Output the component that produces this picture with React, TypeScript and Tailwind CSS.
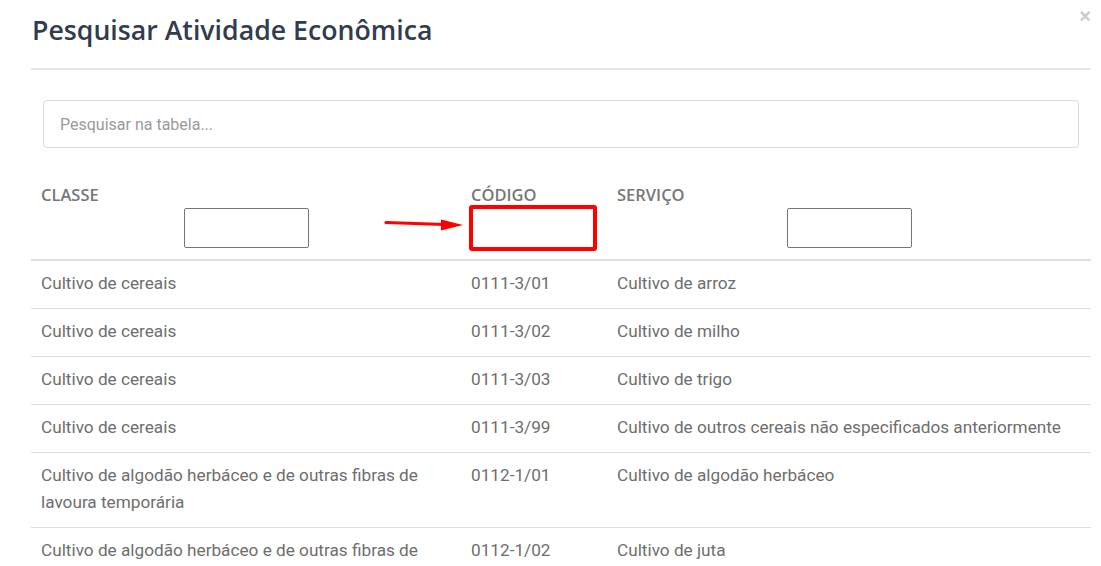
import React from "react";

const ROWS = [
  { classe: "Cultivo de cereais", codigo: "0111-3/01", servico: "Cultivo de arroz" },
  { classe: "Cultivo de cereais", codigo: "0111-3/02", servico: "Cultivo de milho" },
  { classe: "Cultivo de cereais", codigo: "0111-3/03", servico: "Cultivo de trigo" },
  {
    classe: "Cultivo de cereais",
    codigo: "0111-3/99",
    servico: "Cultivo de outros cereais não especificados anteriormente",
  },
  {
    classe: "Cultivo de algodão herbáceo e de outras fibras de lavoura temporária",
    codigo: "0112-1/01",
    servico: "Cultivo de algodão herbáceo",
  },
  {
    classe: "Cultivo de algodão herbáceo e de outras fibras de lavoura temporária",
    codigo: "0112-1/02",
    servico: "Cultivo de juta",
  },
];

function HeaderCell({
  label,
  highlight = false,
  width,
}: {
  label: string;
  highlight?: boolean;
  width: string;
}) {
  return (
    <th className={`${width} px-[10px] pt-[10px] pb-[11px] text-left align-top font-normal`}>
      <div className="h-[20px] text-[16.5px] leading-[20px] font-semibold text-[#777] font-['Open_Sans',sans-serif]">
        {label}
      </div>
      <div className="mt-[3px] h-[40px] flex items-center justify-center">
        {highlight ? (
          <input className="w-[128px] h-[46px] shrink-0 -ml-[2px] border-[4px] border-[#f00] rounded-[3px] bg-white outline-none" />
        ) : (
          <input className="w-[125px] h-[40px] shrink-0 border border-[#777] rounded-[2px] bg-white outline-none" />
        )}
      </div>
    </th>
  );
}

export default function App() {
  return (
    <div className="relative w-[1101px] h-[566px] overflow-hidden bg-white font-['Roboto',sans-serif]">
      <button className="absolute right-[10px] top-[6px] text-[20px] font-bold leading-none text-[#c9c9c9] font-['Liberation_Sans',sans-serif]">
        ×
      </button>

      <div className="pl-[31px] pr-[10px]">
        {/* Title */}
        <h4 className="pt-[12px] pb-[20px] pl-[1px] text-[26.7px] leading-[36px] font-semibold text-[#333c4e] font-['Open_Sans',sans-serif]">
          Pesquisar Atividade Econômica
        </h4>
        <div className="h-[2px] bg-[#e6e6e6]" />

        {/* Search */}
        <div className="px-[12px] pt-[30px] pb-[27px]">
          <input
            placeholder="Pesquisar na tabela..."
            className="w-full h-[48px] px-[16px] rounded-[4px] border border-[#dcdcdc] text-[16px] text-[#555] placeholder:text-[#9a9a9a] outline-none"
          />
        </div>

        {/* Table */}
        <div className="relative">
          {/* annotation arrow */}
          <svg
            className="absolute left-[353px] top-[42px]"
            width="82"
            height="16"
            viewBox="0 0 82 16"
          >
            <line x1="2" y1="5.5" x2="60" y2="7.5" stroke="#f00" strokeWidth="3.2" strokeLinecap="round" />
            <polygon points="57,2.5 79,8 57,13.5" fill="#f00" />
          </svg>
          <table className="w-full table-fixed border-collapse">
            <thead>
              <tr className="border-b-2 border-[#dedede]">
                <HeaderCell label="CLASSE" width="w-[430px]" />
                <HeaderCell label="CÓDIGO" width="w-[146px]" highlight />
                <HeaderCell label="SERVIÇO" width="w-[484px]" />
              </tr>
            </thead>
            <tbody>
              {ROWS.map((row, i) => (
                <tr key={i} className="border-b border-[#dedede]">
                  <td className="px-[10px] pt-[9px] pb-[11px] align-top text-[17.2px] leading-[27px] text-[#6e6e6e]">
                    {row.classe}
                  </td>
                  <td className="px-[10px] pt-[9px] pb-[11px] align-top text-[17.2px] leading-[27px] text-[#6e6e6e]">
                    {row.codigo}
                  </td>
                  <td className="px-[10px] pt-[9px] pb-[11px] align-top text-[17.2px] leading-[27px] text-[#6e6e6e]">
                    {row.servico}
                  </td>
                </tr>
              ))}
            </tbody>
          </table>
        </div>
      </div>
    </div>
  );
}
